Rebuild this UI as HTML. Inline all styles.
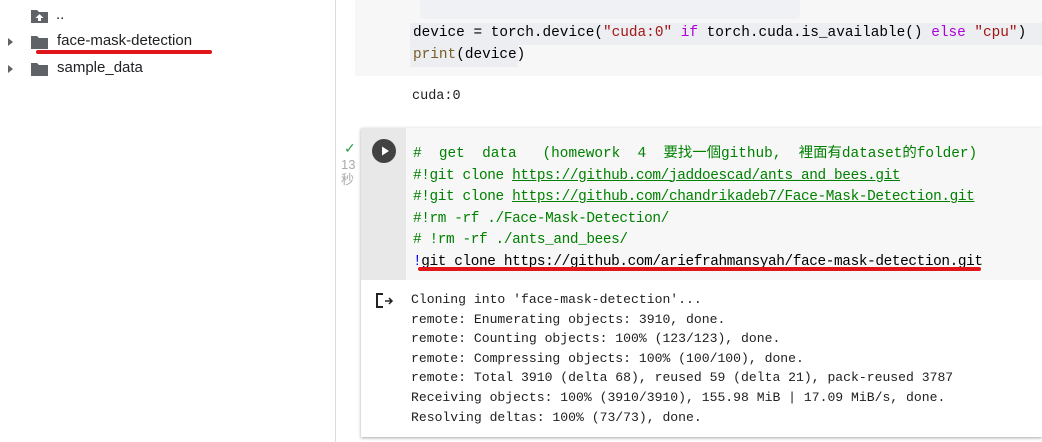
<!DOCTYPE html>
<html><head><meta charset="utf-8"><style>
body{margin:0;width:1042px;height:442px;overflow:hidden;background:#fff;font-family:"Liberation Sans",sans-serif;position:relative}
.a{position:absolute}
.side{left:0;top:0;width:335px;height:442px;border-right:1px solid #dadce0}
.ft{font-size:15px;color:#202124}
.code{font-family:"Liberation Mono","Noto Sans CJK TC",monospace;font-size:14.4px;white-space:pre;line-height:21.5px}
.out{font-family:"Liberation Mono","Noto Sans CJK TC",monospace;font-size:13.1px;white-space:pre;line-height:19.6px;color:#212121}
.g{color:#008000}.u{text-decoration:underline}.r{color:#a31515}.k{color:#af00db}.b{color:#795e26}
.t{letter-spacing:-0.38px}
</style></head><body>
<div class="a side"></div>
<svg class="a" style="left:30px;top:8px" width="20" height="16" viewBox="0 0 20 16"><path d="M1 2h6l2 2h9v11H1z" fill="#5f6368"/><path d="M9.5 6l-4 4h2.5v3h3v-3h2.5z" fill="#fff"/></svg>
<div class="a ft" style="left:56px;top:6px">..</div>
<svg class="a" style="left:7px;top:37px" width="8" height="10"><path d="M1 1l5 4-5 4z" fill="#5f6368"/></svg>
<svg class="a" style="left:30px;top:34px" width="20" height="16" viewBox="0 0 20 16"><path d="M1 2h6l2 2h9v11H1z" fill="#5f6368"/></svg>
<div class="a ft" style="left:57px;top:32px">face-mask-detection</div>
<div class="a" style="left:36px;top:50px;width:176px;height:4px;border-radius:2px;background:#e0161b"></div>
<svg class="a" style="left:7px;top:64px" width="8" height="10"><path d="M1 1l5 4-5 4z" fill="#5f6368"/></svg>
<svg class="a" style="left:30px;top:61px" width="20" height="16" viewBox="0 0 20 16"><path d="M1 2h6l2 2h9v11H1z" fill="#5f6368"/></svg>
<div class="a ft" style="left:57px;top:59px">sample_data</div>
<div class="a" style="left:355px;top:0;width:687px;height:76px;background:#f7f7f7"></div>
<div class="a" style="left:420px;top:0;width:380px;height:19px;background:#f0f1f4;border-radius:0 0 4px 4px"></div>
<div class="a" style="left:410px;top:23px;width:632px;height:22px;background:#eceef2"></div>
<div class="a" style="left:410px;top:45px;width:108px;height:22px;background:#eceef2"></div>
<div class="a code" style="left:413px;top:23px;color:#000">device = torch.device(<span class="r">"cuda:0"</span> <span class="k">if</span> torch.cuda.is_available() <span class="k">else</span> <span class="r">"cpu"</span>)
<span class="b">print</span>(device)</div>
<div class="a out" style="left:412px;top:87px;font-size:13.5px">cuda:0</div>
<div class="a" style="left:344px;top:140px;color:#2e9e4a;font-size:14px">✓</div>
<div class="a" style="left:341px;top:157px;color:#aaa;font-size:13px;line-height:15px;font-family:'Liberation Sans','Noto Sans CJK TC',sans-serif">13<br>秒</div>
<div class="a" style="left:361px;top:128px;width:681px;height:309px;box-shadow:0 1px 3px rgba(0,0,0,.35);background:#fff"></div>
<div class="a" style="left:361px;top:128px;width:45px;height:152px;background:#e8e8e8"></div>
<div class="a" style="left:406px;top:128px;width:636px;height:152px;background:#f7f7f7"></div>
<div class="a" style="left:372px;top:139px;width:24px;height:24px;border-radius:50%;background:#424242"></div>
<svg class="a" style="left:372px;top:139px" width="24" height="24"><path d="M10 7.5v9l7-4.5z" fill="#fff"/></svg>
<div class="a code g" style="left:413px;top:144px;color:#008000"><span>#  get  data   (homework  4  要找一個github,  裡面有dataset的folder)</span>
<span class="t">#!git clone <span class="u">https://github.com/jaddoescad/ants_and_bees.git</span></span>
<span class="t">#!git clone <span class="u">https://github.com/chandrikadeb7/Face-Mask-Detection.git</span></span>
<span class="t">#!rm -rf ./Face-Mask-Detection/</span>
<span class="t"># !rm -rf ./ants_and_bees/</span>
<span class="t"><span style="color:#0000ff">!</span><span style="color:#000">git clone https://github.com/ariefrahmansyah/face-mask-detection.git</span></span></div>
<div class="a" style="left:418px;top:267px;width:563px;height:4px;border-radius:2px;background:#e0161b"></div>
<svg class="a" style="left:375px;top:292px" width="20" height="18"><path d="M8 2H2v13h6" fill="none" stroke="#222" stroke-width="2"/><path d="M10 9h7M14 6l3 3-3 3" fill="none" stroke="#222" stroke-width="1.5"/></svg>
<div class="a out" style="left:411px;top:290px">Cloning into 'face-mask-detection'...
remote: Enumerating objects: 3910, done.
remote: Counting objects: 100% (123/123), done.
remote: Compressing objects: 100% (100/100), done.
remote: Total 3910 (delta 68), reused 59 (delta 21), pack-reused 3787
Receiving objects: 100% (3910/3910), 155.98 MiB | 17.09 MiB/s, done.
Resolving deltas: 100% (73/73), done.</div>
</body></html>
